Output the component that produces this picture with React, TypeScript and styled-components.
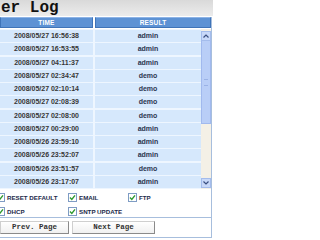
import React from 'react'
import styled, { createGlobalStyle } from 'styled-components'

const GlobalStyle = createGlobalStyle`
  html, body {
    margin: 0;
    padding: 0;
    background: #ffffff;
    overflow: hidden;
  }
`

const COLORS = {
  header: '#5d92d4',
  headerBorder: '#3f74b8',
  row: '#d6e8fc',
  rowLine: '#eef6ff',
  frame: '#a7bedd',
  text: '#363636',
  result: '#2c3550',
}

const StyledPage = styled.div`
  width: 213px;
  font-family: 'Liberation Sans', Arial, sans-serif;
`

const StyledTitleBar = styled.div`
  height: 16px;
  padding-left: 1px;
  background: linear-gradient(to bottom, #d9d9d9, #ececec);
  font-family: 'Liberation Mono', 'Courier New', monospace;
  font-weight: bold;
  font-size: 16px;
  line-height: 16px;
  color: #111;
  white-space: nowrap;
`

const StyledFrame = styled.div`
  width: 211px;
  border-right: 1px solid ${COLORS.frame};
  margin-top: 1px;
`

const StyledHeader = styled.div`
  display: grid;
  grid-template-columns: 93px 1fr;
  column-gap: 2px;
  height: 11px;
`

const StyledHeaderCell = styled.div`
  background: ${COLORS.header};
  border: 1px solid ${COLORS.headerBorder};
  border-top-color: #8db3e6;
  color: #ffffff;
  font-weight: bold;
  font-size: 6.5px;
  line-height: 9px;
  text-align: center;
  letter-spacing: 0.2px;
`

const StyledScrollArea = styled.div`
  display: flex;
  height: 160px;
  margin-top: 1px;
  background: ${COLORS.rowLine};
`

const StyledRows = styled.div`
  flex: 1;
  display: grid;
  grid-template-columns: 93px 106px;
  grid-auto-rows: 12px;
  column-gap: 2px;
  row-gap: 1.25px;
  padding-top: 1px;
`

const StyledCell = styled.div<{ $result?: boolean }>`
  background: ${COLORS.row};
  color: ${(p) => (p.$result ? COLORS.result : COLORS.text)};
  font-weight: bold;
  font-size: 7px;
  line-height: 12px;
  text-align: center;
  white-space: nowrap;
`

const StyledScrollbar = styled.div`
  width: 10px;
  display: flex;
  flex-direction: column;
  background: #f4f0e6;
  padding: 2px 0 1px;
`

const StyledArrowButton = styled.div`
  height: 8px;
  background: #c8d8f8;
  border: 1px solid #a4bcec;
  display: flex;
  align-items: center;
  justify-content: center;
`

const StyledThumb = styled.div`
  height: 82px;
  background: #b9cef7;
  border: 1px solid #a1b9ee;
  border-top: none;
  display: flex;
  align-items: center;
  justify-content: center;
`

const StyledGrip = styled.div`
  width: 4px;
  height: 5px;
  border-top: 1px solid #9ab2e6;
  border-bottom: 1px solid #9ab2e6;
`

const StyledTrack = styled.div`
  flex: 1;
`

const StyledOptions = styled.div`
  display: grid;
  grid-template-columns: 72px 60px auto;
  grid-auto-rows: 14px;
  margin-left: -4px;
  padding-top: 1px;
  height: 27px;
  border-bottom: 1px solid ${COLORS.frame};
`

const StyledOption = styled.label`
  display: flex;
  align-items: center;
  gap: 2px;
  font-size: 6.2px;
  font-weight: bold;
  color: #1c2a4a;
  white-space: nowrap;
`

const StyledBox = styled.span`
  width: 7px;
  height: 7px;
  border: 1px solid #7f9cc4;
  background: #ffffff;
  display: flex;
  align-items: center;
  justify-content: center;
`

const StyledButtons = styled.div`
  display: flex;
  gap: 3px;
  padding: 3px 0 3px;
  border-bottom: 1px solid ${COLORS.frame};
`

const StyledButton = styled.div<{ $width: number }>`
  width: ${(p) => p.$width}px;
  height: 13px;
  box-sizing: border-box;
  border: 1px solid #8a8a8a;
  border-top-color: #cfcfcf;
  border-left-color: #cfcfcf;
  background: linear-gradient(to bottom, #ffffff, #f0f0f0);
  font-family: 'Liberation Mono', 'Courier New', monospace;
  font-weight: bold;
  font-size: 7.5px;
  line-height: 11px;
  text-align: center;
  color: #333;
`

const LOGS: [string, string][] = [
  ['2008/05/27 16:56:38', 'admin'],
  ['2008/05/27 16:53:55', 'admin'],
  ['2008/05/27 04:11:37', 'admin'],
  ['2008/05/27 02:34:47', 'demo'],
  ['2008/05/27 02:10:14', 'demo'],
  ['2008/05/27 02:08:39', 'demo'],
  ['2008/05/27 02:08:00', 'demo'],
  ['2008/05/27 00:29:00', 'admin'],
  ['2008/05/26 23:59:10', 'admin'],
  ['2008/05/26 23:52:07', 'admin'],
  ['2008/05/26 23:51:57', 'demo'],
  ['2008/05/26 23:17:07', 'admin'],
]

const OPTIONS = ['RESET DEFAULT', 'EMAIL', 'FTP', 'DHCP', 'SNTP UPDATE']

function Check() {
  return (
    <StyledBox>
      <svg width="7" height="7" viewBox="0 0 7 7">
        <path d="M1 3.6 L2.8 5.4 L6 1.4" fill="none" stroke="#2e9a2e" strokeWidth="1.4" />
      </svg>
    </StyledBox>
  )
}

function Arrow({ down }: { down?: boolean }) {
  return (
    <svg width="6" height="4" viewBox="0 0 6 4">
      <path
        d={down ? 'M0.5 0.5 L3 3 L5.5 0.5' : 'M0.5 3.5 L3 1 L5.5 3.5'}
        fill="none"
        stroke="#3a4f80"
        strokeWidth="1.2"
      />
    </svg>
  )
}

export default function App() {
  return (
    <StyledPage>
      <GlobalStyle />
      <StyledTitleBar>er Log</StyledTitleBar>
      <StyledFrame>
        <StyledHeader>
          <StyledHeaderCell>TIME</StyledHeaderCell>
          <StyledHeaderCell>RESULT</StyledHeaderCell>
        </StyledHeader>
        <StyledScrollArea>
          <StyledRows>
            {LOGS.map(([time, result], i) => (
              <React.Fragment key={`log-${i}`}>
                <StyledCell>{time}</StyledCell>
                <StyledCell $result>{result}</StyledCell>
              </React.Fragment>
            ))}
          </StyledRows>
          <StyledScrollbar>
            <StyledArrowButton>
              <Arrow />
            </StyledArrowButton>
            <StyledThumb>
              <StyledGrip />
            </StyledThumb>
            <StyledTrack />
            <StyledArrowButton>
              <Arrow down />
            </StyledArrowButton>
          </StyledScrollbar>
        </StyledScrollArea>
        <StyledOptions>
          {OPTIONS.map((label) => (
            <StyledOption key={label}>
              <Check />
              {label}
            </StyledOption>
          ))}
        </StyledOptions>
        <StyledButtons>
          <StyledButton $width={69}>Prev. Page</StyledButton>
          <StyledButton $width={83}>Next Page</StyledButton>
        </StyledButtons>
      </StyledFrame>
    </StyledPage>
  )
}
